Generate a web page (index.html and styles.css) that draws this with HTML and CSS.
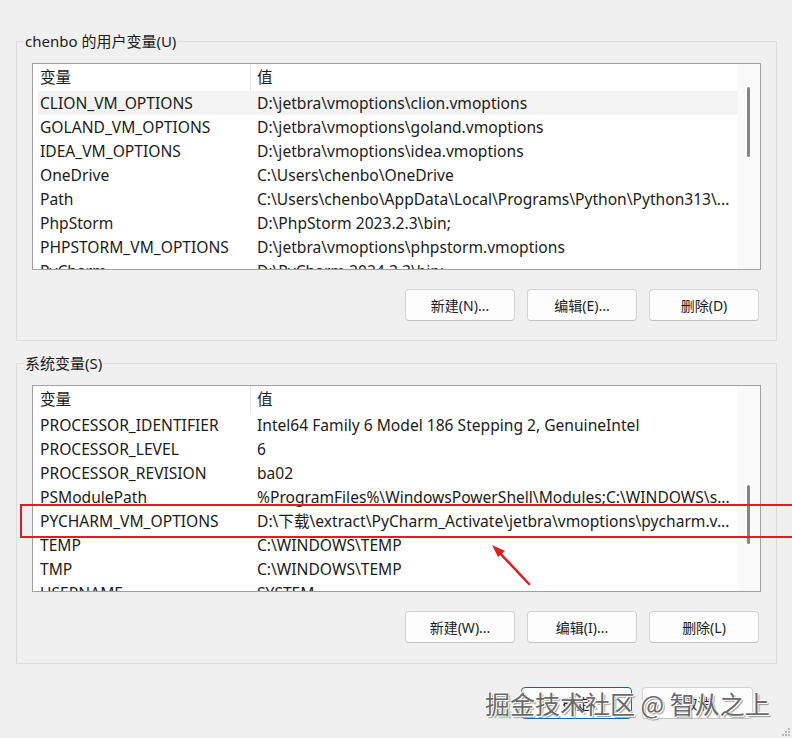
FILE: index.html
```html
<!DOCTYPE html>
<html lang="zh-CN">
<head>
  <meta charset="UTF-8" />
  <title>环境变量</title>
  <link rel="stylesheet" href="styles.css">
</head>
<body>
  <div class="dialog">
    <fieldset class="group">
      <legend>chenbo 的用户变量(U)</legend>
      <div class="list">
        <div class="list-body">
          <div class="row head"><span class="name">变量</span><span class="value">值</span></div>
          <div class="row selected"><span class="name">CLION_VM_OPTIONS</span><span class="value">D:\jetbra\vmoptions\clion.vmoptions</span></div>
          <div class="row"><span class="name">GOLAND_VM_OPTIONS</span><span class="value">D:\jetbra\vmoptions\goland.vmoptions</span></div>
          <div class="row"><span class="name">IDEA_VM_OPTIONS</span><span class="value">D:\jetbra\vmoptions\idea.vmoptions</span></div>
          <div class="row"><span class="name">OneDrive</span><span class="value">C:\Users\chenbo\OneDrive</span></div>
          <div class="row"><span class="name">Path</span><span class="value">C:\Users\chenbo\AppData\Local\Programs\Python\Python313\...</span></div>
          <div class="row"><span class="name">PhpStorm</span><span class="value">D:\PhpStorm 2023.2.3\bin;</span></div>
          <div class="row"><span class="name">PHPSTORM_VM_OPTIONS</span><span class="value">D:\jetbra\vmoptions\phpstorm.vmoptions</span></div>
          <div class="row"><span class="name">PyCharm</span><span class="value">D:\PyCharm 2024.3.3\bin;</span></div>
        </div>
        <div class="scrollbar"><div class="thumb thumb-user"></div></div>
      </div>
      <div class="btn-row">
        <button class="btn">新建(N)...</button>
        <button class="btn">编辑(E)...</button>
        <button class="btn">删除(D)</button>
      </div>
    </fieldset>

    <fieldset class="group group-system">
      <legend>系统变量(S)</legend>
      <div class="list">
        <div class="list-body">
          <div class="row head"><span class="name">变量</span><span class="value">值</span></div>
          <div class="row"><span class="name">PROCESSOR_IDENTIFIER</span><span class="value">Intel64 Family 6 Model 186 Stepping 2, GenuineIntel</span></div>
          <div class="row"><span class="name">PROCESSOR_LEVEL</span><span class="value">6</span></div>
          <div class="row"><span class="name">PROCESSOR_REVISION</span><span class="value">ba02</span></div>
          <div class="row"><span class="name">PSModulePath</span><span class="value">%ProgramFiles%\WindowsPowerShell\Modules;C:\WINDOWS\s...</span></div>
          <div class="row"><span class="name">PYCHARM_VM_OPTIONS</span><span class="value">D:\下载\extract\PyCharm_Activate\jetbra\vmoptions\pycharm.v...</span></div>
          <div class="row"><span class="name">TEMP</span><span class="value">C:\WINDOWS\TEMP</span></div>
          <div class="row"><span class="name">TMP</span><span class="value">C:\WINDOWS\TEMP</span></div>
          <div class="row"><span class="name">USERNAME</span><span class="value">SYSTEM</span></div>
        </div>
        <div class="scrollbar"><div class="thumb thumb-system"></div></div>
      </div>
      <div class="btn-row">
        <button class="btn">新建(W)...</button>
        <button class="btn">编辑(I)...</button>
        <button class="btn">删除(L)</button>
      </div>
    </fieldset>

    <div class="footer">
      <button class="btn btn-default">确定</button>
      <button class="btn">取消</button>
    </div>
  </div>

  <!-- annotations drawn on top of the screenshot -->
  <div class="mark-box"></div>
  <svg class="mark-arrow" width="60" height="60" viewBox="0 0 60 60">
    <line x1="51" y1="52" x2="19" y2="18" stroke="#e11d1d" stroke-width="2.5" stroke-linecap="round"/>
    <polygon points="14,13 27,19 20,25" fill="#e11d1d"/>
  </svg>
  <div class="watermark">掘金技术社区 @ 智从之上</div>
  <svg class="grip" width="12" height="12" viewBox="0 0 12 12">
    <rect x="8" y="2" width="2" height="2" fill="#b8b8b8"/>
    <rect x="5" y="5" width="2" height="2" fill="#b8b8b8"/>
    <rect x="8" y="5" width="2" height="2" fill="#b8b8b8"/>
    <rect x="2" y="8" width="2" height="2" fill="#b8b8b8"/>
    <rect x="5" y="8" width="2" height="2" fill="#b8b8b8"/>
    <rect x="8" y="8" width="2" height="2" fill="#b8b8b8"/>
  </svg>
</body>
</html>
```

FILE: styles.css
```css
body {
  margin: 0;
  background: #f0f0f0;
  font-family: "Noto Sans", "Noto Sans CJK SC", sans-serif;
  font-size: 15.6px;
  color: #1b1b1b;
  width: 792px;
  height: 738px;
  overflow: hidden;
  position: relative;
}
.dialog {
  padding: 31px 15px 0 16px;
}
.group {
  margin: 0;
  padding: 0 15px 19px 15px;
  border: 1px solid #dcdcdc;
}
.group legend {
  margin-left: -8px;
  padding: 0 1px;
  height: 20px;
  line-height: 20px;
  font-size: 15px;
}
.group-system {
  margin-top: 12px;
  padding-bottom: 20px;
}
.list {
  margin-top: 12px;
  height: 205px;
  border: 1px solid #a0a0a0;
  background: #fff;
  display: flex;
  overflow: hidden;
}
.list-body {
  flex: 1;
  padding-left: 5px;
  overflow: hidden;
}
.row {
  display: flex;
  height: 24px;
  line-height: 24px;
  white-space: nowrap;
}
.row.head {
  height: 27px;
  line-height: 27px;
}
.row.selected {
  background: #f3f3f3;
}
.name {
  width: 210px;
  padding-left: 2px;
  flex-shrink: 0;
  overflow: hidden;
}
.value {
  padding-left: 7px;
  overflow: hidden;
}
.head .value {
  border-left: 1px solid #e6e6e6;
  padding-left: 6px;
}
.scrollbar {
  width: 22px;
  background: #f9f9f9;
  position: relative;
}
.thumb {
  position: absolute;
  left: 9px;
  width: 3px;
  border-radius: 2px;
  background: #858585;
}
.thumb-user {
  top: 23px;
  height: 70px;
}
.thumb-system {
  top: 99px;
  height: 59px;
}
.btn-row {
  margin-top: 19px;
  padding-right: 2px;
  display: flex;
  justify-content: flex-end;
  gap: 12px;
}
.btn {
  width: 110px;
  height: 32px;
  font-family: inherit;
  font-size: 14px;
  color: #1b1b1b;
  background: #fdfdfd;
  border: 1px solid #d3d3d3;
  border-bottom-color: #c2c2c2;
  border-radius: 4px;
}
.footer {
  margin-top: 23px;
  padding-right: 24px;
  display: flex;
  justify-content: flex-end;
  gap: 10px;
}
.footer .btn {
  width: 111px;
}
.btn-default {
  border: 1px solid #0067c0;
  box-shadow: inset 0 0 0 1px #fff;
}
.mark-box {
  position: absolute;
  left: 20px;
  top: 504px;
  width: 790px;
  height: 30px;
  border: 2px solid #e11d1d;
}
.mark-arrow {
  position: absolute;
  left: 478px;
  top: 532px;
}
.watermark {
  position: absolute;
  left: 485px;
  top: 686px;
  font-family: "Noto Sans CJK SC", sans-serif;
  font-size: 25px;
  line-height: 34px;
  color: #6a6a6a;
  text-shadow: 1px 1px 0 #fff, -1px -1px 0 #fff, 2px 2px 1px #9a9a9a;
  white-space: nowrap;
}
.grip {
  position: absolute;
  right: 0;
  bottom: 0;
}
```
